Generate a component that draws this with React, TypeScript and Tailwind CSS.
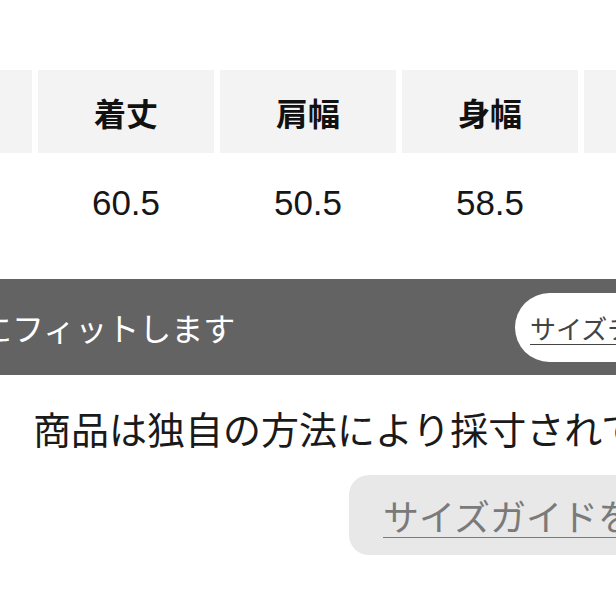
import React from 'react';

interface Column {
  label: string;
  value: string;
}

const columns: Column[] = [
  { label: 'サイズ', value: 'F' },
  { label: '着丈', value: '60.5' },
  { label: '肩幅', value: '50.5' },
  { label: '身幅', value: '58.5' },
  { label: '袖丈', value: '22.0' },
];

const jp = { fontFamily: '"Noto Sans CJK JP", "Noto Sans", sans-serif' };
const latin = { fontFamily: '"Liberation Sans", Arial, sans-serif' };

const App: React.FC = () => {
  return (
    <div className="w-[616px] h-[616px] overflow-hidden bg-white" style={jp}>
      {/* サイズ表 */}
      <div className="pt-[70px] flex gap-[6px] ml-[-144px]">
        {columns.map((col) => (
          <div key={col.label} className="w-[176px] shrink-0 flex flex-col">
            <div className="h-[83px] bg-[#f3f3f3] flex items-center justify-center text-[32px] font-bold text-[#111]">
              {col.label}
            </div>
            <div className="h-[100px] flex items-center justify-center text-[35px] text-[#161616]" style={latin}>
              {col.value}
            </div>
          </div>
        ))}
      </div>

      {/* フィット感バー */}
      <div className="mt-[26px] h-[96px] w-[760px] bg-[#636363] flex items-center">
        <div className="w-[535px] ml-[-20px] shrink-0 whitespace-nowrap text-[32px] text-white">
          にフィットします
        </div>
        <div className="h-[69px] w-[220px] shrink-0 rounded-full bg-white flex items-center pl-[15px]">
          <span className="whitespace-nowrap text-[26px] text-[#444] underline decoration-1 underline-offset-[5px]">
            サイズチャート
          </span>
        </div>
      </div>

      {/* 注記 */}
      <div className="mt-[26px] h-[54px] leading-[54px] pl-[33px] whitespace-nowrap text-[38px] text-[#1a1a1a]">
        商品は独自の方法により採寸されています
      </div>

      <div className="mt-[20px] ml-[349px] w-[420px] h-[80px] rounded-[20px] bg-[#e8e8e8] flex items-center pl-[34px]">
        <span className="whitespace-nowrap text-[36px] text-[#7a7a7a] underline decoration-1 underline-offset-[6px]">
          サイズガイドを見る
        </span>
      </div>
    </div>
  );
};

export default App;
